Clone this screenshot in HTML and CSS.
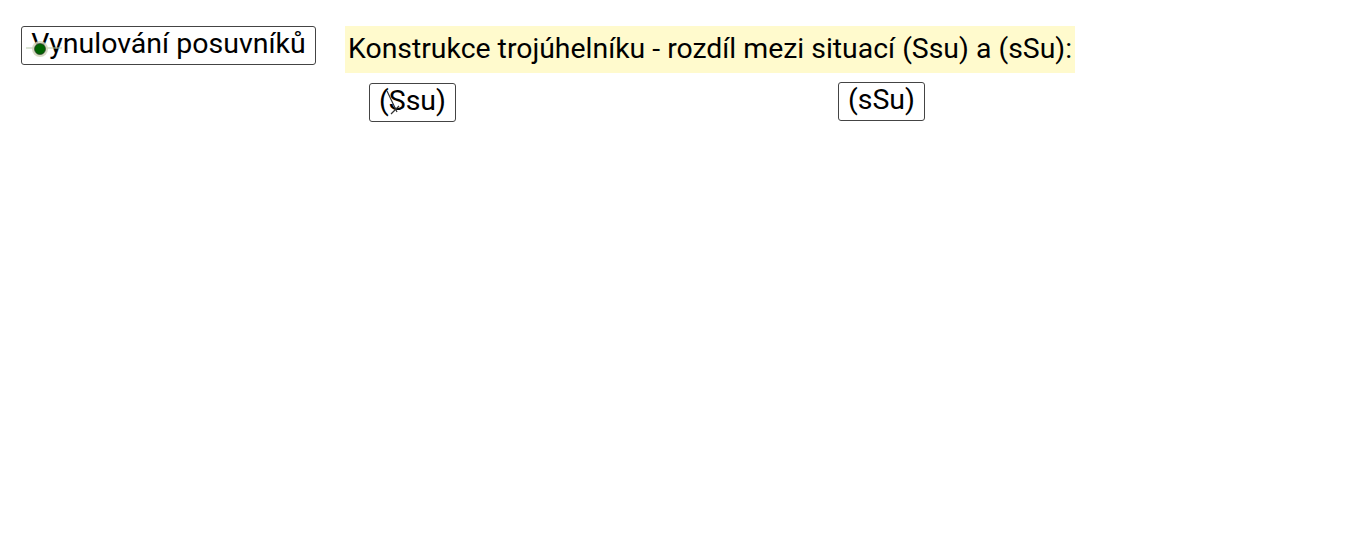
FILE: index.html
```html
<!DOCTYPE html>
<html lang="cs">
<head>
    <meta charset="UTF-8">
    <title>Konstrukce trojúhelníku</title>
    <link rel="stylesheet" href="styles.css">
</head>
<body>

<div class="applet">
    <div class="top-row">
        <button class="ggb-btn reset-btn">Vynulování posuvníků</button>
        <div class="title">Konstrukce trojúhelníku - rozdíl mezi situací (Ssu) a (sSu):</div>
    </div>

    <div class="case-row">
        <button class="ggb-btn case-btn case-a">(Ssu)</button>
        <button class="ggb-btn case-btn case-b">(sSu)</button>
    </div>

    <!-- points lying over the buttons -->
    <svg class="point point-green" width="40" height="20" viewBox="0 0 40 20">
        <line x1="2" y1="10" x2="38" y2="10" stroke="#b5c9a8" stroke-width="1"/>
        <circle cx="16" cy="11" r="8" fill="#cfd5b8" opacity="0.85"/>
        <circle cx="16" cy="11" r="5.5" fill="#006400" stroke="#2a2a2a" stroke-width="0.6"/>
    </svg>
    <svg class="point point-cross" width="20" height="26" viewBox="0 0 20 26">
        <path d="M2 2 L12 23 M14 17 L6 25" stroke="#333" stroke-width="1.2" fill="none"/>
    </svg>
</div>

</body>
</html>
```

FILE: styles.css
```css
body {
    margin: 0;
    background-color: #fff;
    font-family: Roboto, "Liberation Sans", sans-serif;
}

.applet {
    position: relative;
    width: 1366px;
    height: 558px;
}

.top-row {
    display: flex;
    align-items: flex-start;
    padding: 26px 0 0 21px;
    gap: 29px;
}

.ggb-btn {
    font-family: Roboto, "Liberation Sans", sans-serif;
    font-size: 28.5px;
    color: #000;
    background-color: #fff;
    border: 1px solid #444;
    border-radius: 3px;
    height: 39px;
    padding: 0 0 3px 0;
    line-height: 34px;
    cursor: pointer;
    white-space: nowrap;
}

.reset-btn {
    width: 295px;
    text-align: center;
}

.title {
    background-color: #fffacd;
    font-size: 28.4px;
    height: 47px;
    line-height: 45px;
    padding: 0 3px;
    color: #000;
}

.case-row {
    display: flex;
    align-items: flex-start;
    padding-left: 369px;
    margin-top: 9px;
}

.case-btn {
    width: 87px;
}

.case-a {
    margin-top: 1px;
}

.case-b {
    margin-left: 382px;
}

.point {
    position: absolute;
}

.point-green {
    left: 24px;
    top: 38px;
}

.point-cross {
    left: 385px;
    top: 89px;
}
```
